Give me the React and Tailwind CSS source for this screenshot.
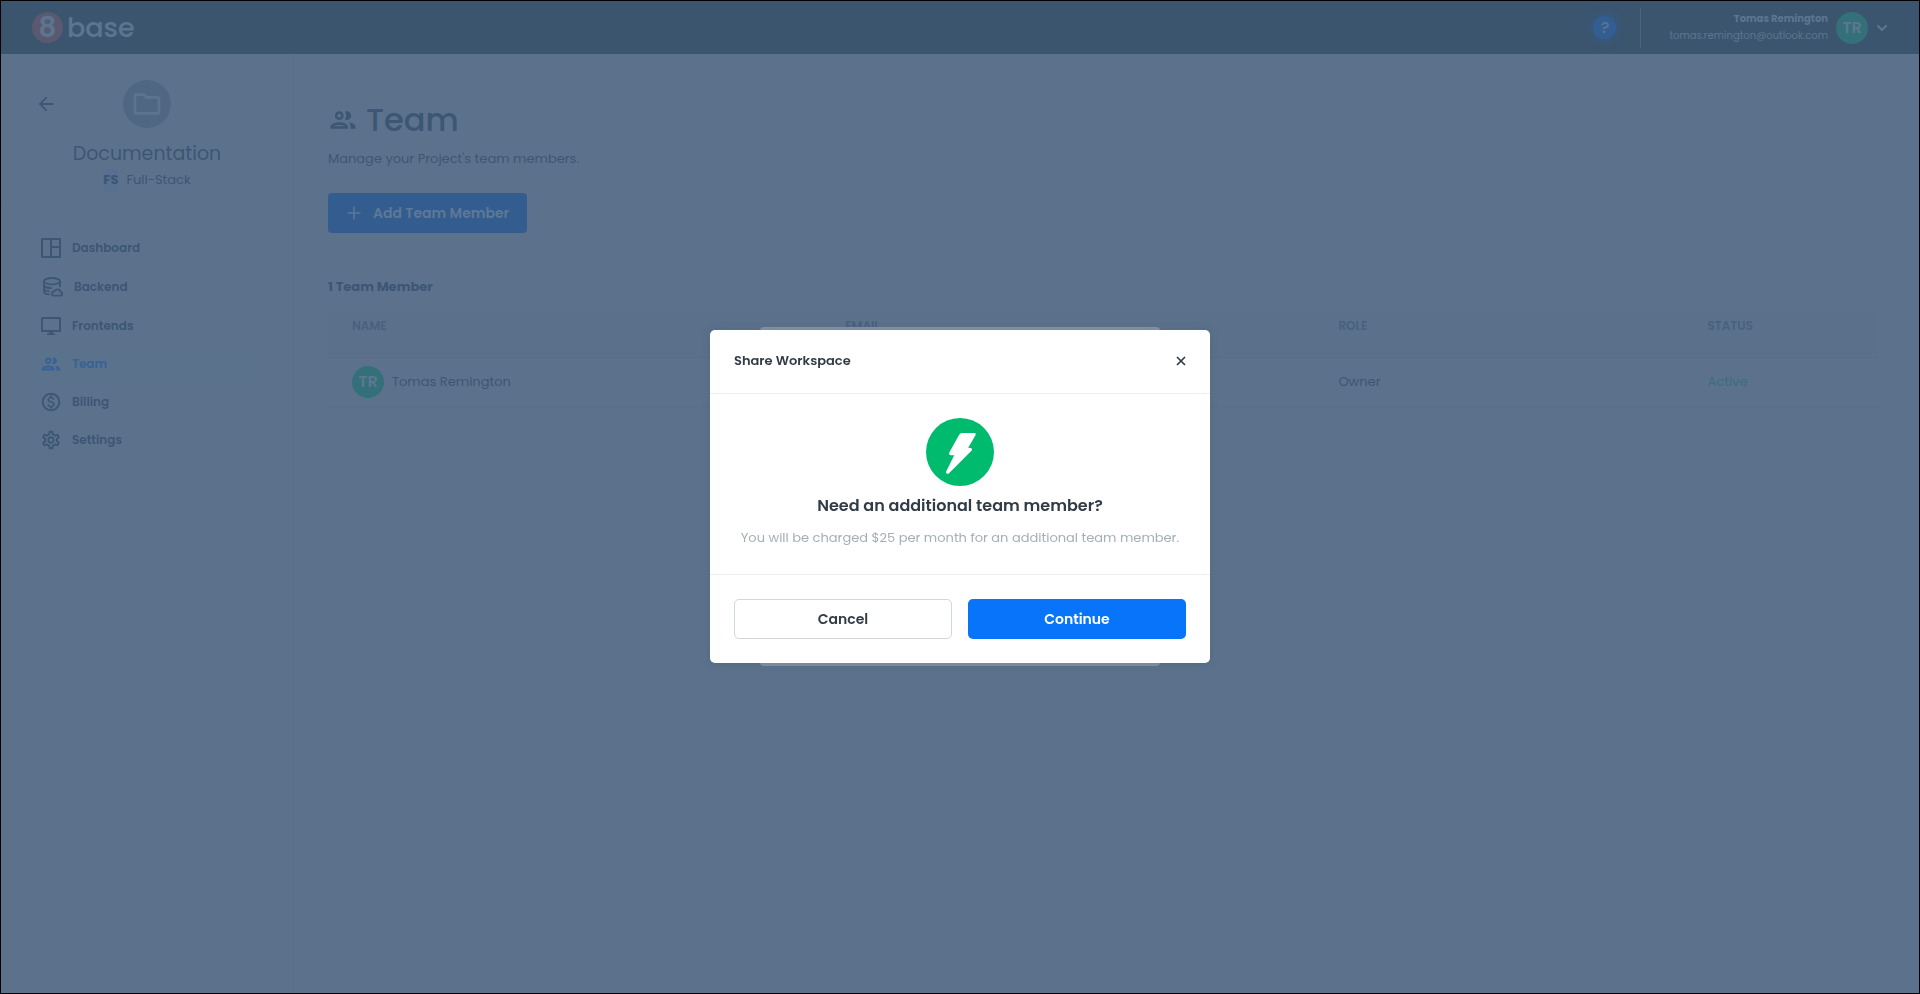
import { MdOutlineGroup, MdOutlineFolder, MdArrowBack, MdOutlineSettings, MdOutlineMonetizationOn } from "react-icons/md";

function DashboardIcon() {
  return (
    <svg className="size-5" viewBox="0 0 20 20" fill="none" stroke="currentColor" strokeWidth="2" strokeLinejoin="round">
      <rect x="1" y="1" width="18" height="18" />
      <path d="M10 1v18M10 9h9" />
    </svg>
  );
}

function BackendIcon() {
  return (
    <svg className="size-5" viewBox="0 0 20 20" fill="none" stroke="currentColor" strokeWidth="1.8" strokeLinejoin="round">
      <ellipse cx="9" cy="4.200" rx="8" ry="3.200" />
      <path d="M1 4v10.500c0 1.600 2 2.700 5.500 3.100M17 4v6M1 8c.3 2 3.300 3.100 7.500 3M1 11.500c.2 1.500 2.200 2.500 5.500 2.900" />
      <path d="M10.500 18.600h6.800a1.900 1.900 0 0 0 .2-3.800 3.200 3.200 0 0 0-6.100-.3 2.100 2.100 0 0 0-.9 4.100z" />
    </svg>
  );
}

function FrontendsIcon() {
  return (
    <svg className="size-5" viewBox="0 0 20 20" fill="none" stroke="currentColor" strokeWidth="1.900" strokeLinejoin="round">
      <rect x="1" y="2" width="18" height="13" />
      <path d="M8 15.500h4v2h2v1.500H6v-1.500h2z" fill="currentColor" stroke="none" />
    </svg>
  );
}

function BoltIcon() {
  return (
    <svg className="size-[68px]" viewBox="0 0 68 68" aria-hidden="true">
      <circle cx="34" cy="34" r="34" fill="#00bb6e" />
      <path
        d="M36.200 15h12.200q2 .2 1.200 2.100L42.200 29.800q2.500.1 3.600.8.700.8-.1 1.900L23 55.300q-1.500 1.100-2.600 0-.6-.7-.2-1.800L28.200 37.200q-3.500.1-4.700-.5-.7-.7-.2-2.200L33 17q1.200-1.900 3.200-2z"
        fill="#fff"
      />
    </svg>
  );
}

const navItems = [
  { label: "Dashboard", icon: <DashboardIcon />, row: "h-[38px] pl-4" },
  { label: "Backend", icon: <BackendIcon />, row: "h-10 pl-[18px]" },
  { label: "Frontends", icon: <FrontendsIcon />, row: "h-[38px] pl-4" },
  { label: "Team", icon: <MdOutlineGroup className="-mx-px size-[22px]" />, row: "h-[38px] pl-4", active: true },
  { label: "Billing", icon: <MdOutlineMonetizationOn className="-mx-px size-[22px]" />, row: "h-[38px] pl-4" },
  { label: "Settings", icon: <MdOutlineSettings className="-mx-px size-[22px]" />, row: "h-[38px] pl-4" },
];

function Avatar() {
  return (
    <span className="flex size-8 shrink-0 items-center justify-center rounded-full bg-[#33707a] text-base font-semibold text-[#5e778f]">
      TR
    </span>
  );
}

function Header() {
  return (
    <header className="flex h-[53px] items-center justify-between bg-[#3b556f] pr-[25px] pl-[31px] text-[#5c758f]">
      <a href="#home" className="flex items-center gap-1" aria-label="8base">
        <span className="flex size-[31px] items-center justify-center rounded-full bg-[#5b5971] text-[28px] leading-none font-semibold">8</span>
        <span className="text-[27px] leading-8 font-medium">base</span>
      </a>
      <div className="flex items-center">
        <button type="button" aria-label="Help" className="mr-6 flex size-[23px] items-center justify-center rounded-full bg-[#325e92] text-base font-medium shadow-[0_0_8px_#325e92]">
          ?
        </button>
        <div className="flex h-10 items-center gap-2 border-l border-[#4a637e]">
          <div className="pb-0.5 pl-7 text-right text-[10px] leading-[17px]">
            <p className="font-bold">Tomas Remington</p>
            <p>tomas.remington@outlook.com</p>
          </div>
          <Avatar />
        </div>
        <button type="button" aria-label="Account menu" className="ml-0.5">
          <svg className="size-6" viewBox="0 0 24 24" fill="none" stroke="currentColor" strokeWidth="2.200" strokeLinecap="round" strokeLinejoin="round">
            <path d="M8 10l4 4 4-4" />
          </svg>
        </button>
      </div>
    </header>
  );
}

function Sidebar() {
  return (
    <aside className="w-[288px] shrink-0 border-r border-[#5a7089] text-[#3c5674]">
      <div className="relative flex flex-col items-center border-b border-[#5a708a] pt-[26px] pb-3 pl-[5px]">
        <button type="button" aria-label="Back" className="absolute top-[39px] left-[34px]">
          <MdArrowBack className="size-[22px]" />
        </button>
        <span className="flex size-12 items-center justify-center rounded-full bg-[#506784] text-[#5d748f]">
          <MdOutlineFolder className="size-8" />
        </span>
        <h2 className="mt-3 text-[19px] leading-7 font-normal">Documentation</h2>
        <p className="mt-px flex items-center gap-2 text-[13px] leading-[22px]">
          <span className="bg-[#587090] font-bold">FS</span>
          <span>Full-Stack</span>
        </p>
      </div>
      <nav className="px-6 pt-[25px]">
        {navItems.map((item) => (
          <a
            key={item.label}
            href={"#" + item.label.toLowerCase()}
            className={"flex items-center gap-[11px] rounded text-xs font-semibold " + item.row + (item.active ? " bg-[#5b728d] text-[#366297]" : "")}
          >
            {item.icon}
            {item.label}
          </a>
        ))}
      </nav>
    </aside>
  );
}

function TeamPage() {
  return (
    <main className="min-w-0 flex-1 pt-[42px] pr-10 pl-[39px] text-[#3c5674]">
      <h1 className="flex items-center gap-2 text-[32px] leading-12 font-medium">
        <MdOutlineGroup className="size-[30px]" />
        Team
      </h1>
      <p className="mt-[3px] text-[13px] leading-6">Manage your Project's team members.</p>
      <button type="button" className="mt-[22px] flex h-10 items-center gap-[11px] rounded bg-[#335d8e] px-[18px] text-sm font-semibold text-[#5e7899]">
        <svg className="size-4" viewBox="0 0 16 16" stroke="currentColor" strokeWidth="1.500">
          <path d="M8 1.500v13M1.500 8h13" />
        </svg>
        Add Team Member
      </button>
      <h2 className="mt-[42px] text-[13px] leading-6 font-bold">1 Team Member</h2>
      <table className="mt-3 w-full table-fixed border-separate border-spacing-0 text-left text-[13px]">
        <thead>
          <tr className="h-[47px] bg-[#5b718b] align-top text-xs text-[#48617e]">
            <th className="w-[31.8%] rounded-tl border-b border-[#586e89] pt-[7px] pl-6 font-semibold">NAME</th>
            <th className="w-[31.8%] border-b border-[#586e89] pt-[7px] pl-6 font-semibold">EMAIL</th>
            <th className="w-[23.8%] border-b border-[#586e89] pt-[7px] pl-6 font-semibold">ROLE</th>
            <th className="rounded-tr border-b border-[#586e89] pt-[7px] pl-6 font-semibold">STATUS</th>
          </tr>
        </thead>
        <tbody>
          <tr className="h-[49px]">
            <td className="border-b border-[#586e89] pl-6">
              <div className="flex items-center gap-2">
                <Avatar />
                Tomas Remington
              </div>
            </td>
            <td className="border-b border-[#586e89] pl-6">tomas.remington@outlook.com</td>
            <td className="border-b border-[#586e89] pl-6">Owner</td>
            <td className="border-b border-[#586e89] pl-6 text-[#376f7c]">Active</td>
          </tr>
        </tbody>
      </table>
    </main>
  );
}

function ShareDialog() {
  return (
    <div className="fixed inset-0 flex items-center justify-center px-4 pt-4 pb-[18px]">
      <div className="relative w-full max-w-[500px]">
        <div className="absolute inset-x-[50px] -inset-y-[3px] rounded bg-[#8493a8]" />
        <section role="dialog" aria-modal="true" aria-labelledby="dialog-title" className="relative rounded-[5px] bg-white text-[#323c47] shadow-[0_1px_10px_rgba(50,60,71,0.2)]">
          <div className="flex h-16 items-center justify-between border-b border-[#e9eef2] px-6">
            <h2 id="dialog-title" className="text-[13px] font-semibold">Share Workspace</h2>
            <button type="button" aria-label="Close">
              <svg className="size-[10px]" viewBox="0 0 10 10" stroke="currentColor" strokeWidth="1.700">
                <path d="M1 1l8 8M9 1l-8 8" />
              </svg>
            </button>
          </div>
          <div className="flex flex-col items-center border-b border-[#e9eef2] px-4 py-6 text-center">
            <BoltIcon />
            <h3 className="mt-2 text-base leading-6 font-semibold">Need an additional team member?</h3>
            <p className="mt-2 text-[13px] leading-6 text-[#a3afb7]">You will be charged $25 per month for an additional team member.</p>
          </div>
          <div className="grid grid-cols-2 gap-4 p-6">
            <button type="button" className="h-10 rounded-[5px] border border-[#d0d7dd] text-sm font-semibold">Cancel</button>
            <button type="button" className="h-10 rounded-[5px] bg-[#0874f9] text-sm font-semibold text-white">Continue</button>
          </div>
        </section>
      </div>
    </div>
  );
}

export default function App() {
  return (
    <div className="flex min-h-screen flex-col border border-black bg-[#5c728c] font-['Poppins','Inter',sans-serif]">
      <Header />
      <div className="flex flex-1">
        <Sidebar />
        <TeamPage />
      </div>
      <ShareDialog />
    </div>
  );
}
